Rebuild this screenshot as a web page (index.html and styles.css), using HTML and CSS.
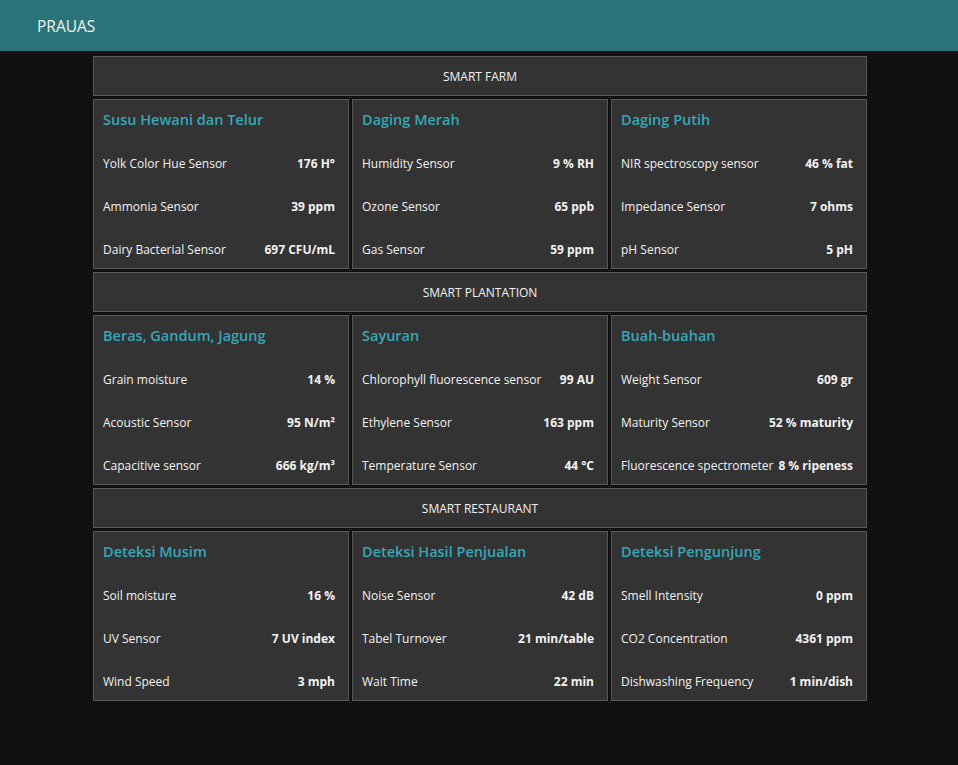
FILE: index.html
```html
<!DOCTYPE html>
<html>
<head>
<meta charset="utf-8">
<link rel="stylesheet" href="styles.css">
</head>
<body>
<header class="topbar">PRAUAS</header>
<main class="wrap">
  <div class="section">SMART FARM</div>
  <div class="cards">
    <div class="card">
      <div class="card-title">Susu Hewani dan Telur</div>
      <div class="row"><span>Yolk Color Hue Sensor</span><b>176 H°</b></div>
      <div class="row"><span>Ammonia Sensor</span><b>39 ppm</b></div>
      <div class="row"><span>Dairy Bacterial Sensor</span><b>697 CFU/mL</b></div>
    </div>
    <div class="card">
      <div class="card-title">Daging Merah</div>
      <div class="row"><span>Humidity Sensor</span><b>9 % RH</b></div>
      <div class="row"><span>Ozone Sensor</span><b>65 ppb</b></div>
      <div class="row"><span>Gas Sensor</span><b>59 ppm</b></div>
    </div>
    <div class="card">
      <div class="card-title">Daging Putih</div>
      <div class="row"><span>NIR spectroscopy sensor</span><b>46 % fat</b></div>
      <div class="row"><span>Impedance Sensor</span><b>7 ohms</b></div>
      <div class="row"><span>pH Sensor</span><b>5 pH</b></div>
    </div>
  </div>
  <div class="section">SMART PLANTATION</div>
  <div class="cards">
    <div class="card">
      <div class="card-title">Beras, Gandum, Jagung</div>
      <div class="row"><span>Grain moisture</span><b>14 %</b></div>
      <div class="row"><span>Acoustic Sensor</span><b>95 N/m²</b></div>
      <div class="row"><span>Capacitive sensor</span><b>666 kg/m³</b></div>
    </div>
    <div class="card">
      <div class="card-title">Sayuran</div>
      <div class="row"><span>Chlorophyll fluorescence sensor</span><b>99 AU</b></div>
      <div class="row"><span>Ethylene Sensor</span><b>163 ppm</b></div>
      <div class="row"><span>Temperature Sensor</span><b>44 °C</b></div>
    </div>
    <div class="card">
      <div class="card-title">Buah-buahan</div>
      <div class="row"><span>Weight Sensor</span><b>609 gr</b></div>
      <div class="row"><span>Maturity Sensor</span><b>52 % maturity</b></div>
      <div class="row"><span>Fluorescence spectrometer</span><b>8 % ripeness</b></div>
    </div>
  </div>
  <div class="section">SMART RESTAURANT</div>
  <div class="cards">
    <div class="card">
      <div class="card-title">Deteksi Musim</div>
      <div class="row"><span>Soil moisture</span><b>16 %</b></div>
      <div class="row"><span>UV Sensor</span><b>7 UV index</b></div>
      <div class="row"><span>Wind Speed</span><b>3 mph</b></div>
    </div>
    <div class="card">
      <div class="card-title">Deteksi Hasil Penjualan</div>
      <div class="row"><span>Noise Sensor</span><b>42 dB</b></div>
      <div class="row"><span>Tabel Turnover</span><b>21 min/table</b></div>
      <div class="row"><span>Wait Time</span><b>22 min</b></div>
    </div>
    <div class="card">
      <div class="card-title">Deteksi Pengunjung</div>
      <div class="row"><span>Smell Intensity</span><b>0 ppm</b></div>
      <div class="row"><span>CO2 Concentration</span><b>4361 ppm</b></div>
      <div class="row"><span>Dishwashing Frequency</span><b>1 min/dish</b></div>
    </div>
  </div>
</main>
</body>
</html>
```
FILE: styles.css
```css
html, body {
  margin: 0;
  padding: 0;
}
body {
  background: #111111;
  color: #f2f2f2;
  font-family: "Open Sans", "Noto Sans", sans-serif;
  font-size: 12px;
  min-height: 765px;
}
.topbar {
  height: 51px;
  background: #2a7479;
  color: #eef4f4;
  display: flex;
  align-items: center;
  padding-left: 37px;
  font-size: 15.5px;
}
.wrap {
  width: 774px;
  padding-left: 2px;
  margin: 5px auto 0;
  display: flex;
  flex-direction: column;
  gap: 3px;
}
.section {
  height: 38px;
  border: 1px solid #595959;
  background: #333333;
  display: flex;
  align-items: center;
  justify-content: center;
  font-size: 12px;
  padding-top: 1px;
  box-sizing: content-box;
  height: 37px;
}
.cards {
  display: grid;
  grid-template-columns: repeat(3, 1fr);
  gap: 3px;
}
.card {
  height: 150px;
  border: 1px solid #595959;
  background: #333333;
  padding: 10px 13px 8px 9px;
}
.card-title {
  line-height: 20px;
  height: 20px;
  font-size: 14.5px;
  font-weight: 600;
  color: #36a7b7;
  margin-bottom: 1px;
}
.row {
  display: flex;
  justify-content: space-between;
  align-items: center;
  height: 20px;
  margin-top: 23px;
  white-space: nowrap;
}
.row b {
  font-weight: 700;
}
```
